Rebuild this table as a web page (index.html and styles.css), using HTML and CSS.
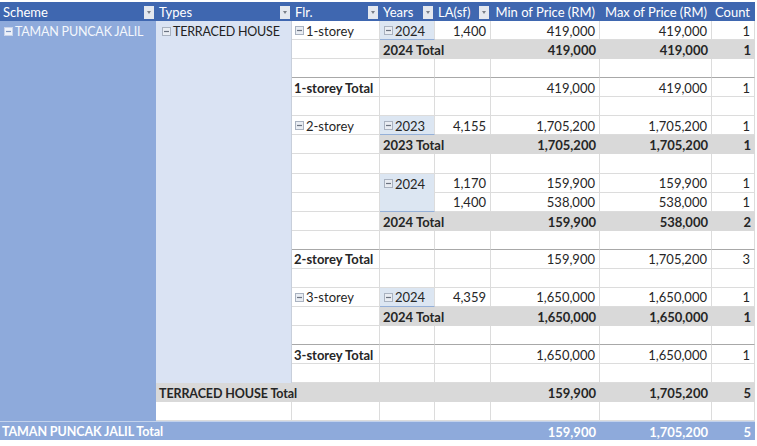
FILE: index.html
```html
<!DOCTYPE html>
<html>
<head>
<meta charset="utf-8">
<link rel="stylesheet" href="styles.css">
</head>
<body>
<div class="pivot">
  <div class="h">Scheme<span class="fb"></span></div>
  <div class="h">Types<span class="fb"></span></div>
  <div class="h">Flr.<span class="fb"></span></div>
  <div class="h">Years<span class="fb"></span></div>
  <div class="h">LA(sf)<span class="fb"></span></div>
  <div class="h r">Min of Price (RM)</div>
  <div class="h r">Max of Price (RM)</div>
  <div class="h r">Count</div>

  <div class="scheme"><span class="lbl"><svg class="tg" viewBox="0 0 9 9"><rect x="0.5" y="0.5" width="8" height="8" fill="#eef2fa" stroke="#c9d4ea"/><path d="M2 4.5h5" stroke="#7f97c4" stroke-width="1.2"/></svg>TAMAN PUNCAK JALIL</span></div>
  <div class="types"><span class="lbl"><svg class="tg" viewBox="0 0 9 9"><rect x="0.5" y="0.5" width="8" height="8" fill="#e9edf3" stroke="#a9b2c0"/><path d="M2 4.5h5" stroke="#6b7380" stroke-width="1.2"/></svg>TERRACED HOUSE</span></div>
  <div class="yr y2024b"><span class="lbl"><svg class="tg" viewBox="0 0 9 9"><rect x="0.5" y="0.5" width="8" height="8" fill="#e9edf3" stroke="#a9b2c0"/><path d="M2 4.5h5" stroke="#6b7380" stroke-width="1.2"/></svg>2024</span></div>

  <!-- row 1 -->
  <div class="c"><svg class="tg" viewBox="0 0 9 9"><rect x="0.5" y="0.5" width="8" height="8" fill="#e9edf3" stroke="#a9b2c0"/><path d="M2 4.5h5" stroke="#6b7380" stroke-width="1.2"/></svg>1-storey</div>
  <div class="yr"><svg class="tg" viewBox="0 0 9 9"><rect x="0.5" y="0.5" width="8" height="8" fill="#e9edf3" stroke="#a9b2c0"/><path d="M2 4.5h5" stroke="#6b7380" stroke-width="1.2"/></svg>2024</div>
  <div class="c n">1,400</div><div class="c n">419,000</div><div class="c n">419,000</div><div class="c n">1</div>
  <!-- row 2 -->
  <div class="c"></div>
  <div class="t s2">2024 Total</div><div class="t n">419,000</div><div class="t n">419,000</div><div class="t n">1</div>
  <!-- row 3 -->
  <div class="c dk"></div><div class="c dk"></div><div class="c dk"></div><div class="c dk"></div><div class="c dk"></div><div class="c dk"></div>
  <!-- row 4 -->
  <div class="c b">1-storey Total</div><div class="c"></div><div class="c"></div><div class="c n">419,000</div><div class="c n">419,000</div><div class="c n">1</div>
  <!-- row 5 -->
  <div class="c"></div><div class="c"></div><div class="c"></div><div class="c"></div><div class="c"></div><div class="c"></div>
  <!-- row 6 -->
  <div class="c"><svg class="tg" viewBox="0 0 9 9"><rect x="0.5" y="0.5" width="8" height="8" fill="#e9edf3" stroke="#a9b2c0"/><path d="M2 4.5h5" stroke="#6b7380" stroke-width="1.2"/></svg>2-storey</div>
  <div class="yr"><svg class="tg" viewBox="0 0 9 9"><rect x="0.5" y="0.5" width="8" height="8" fill="#e9edf3" stroke="#a9b2c0"/><path d="M2 4.5h5" stroke="#6b7380" stroke-width="1.2"/></svg>2023</div>
  <div class="c n">4,155</div><div class="c n">1,705,200</div><div class="c n">1,705,200</div><div class="c n">1</div>
  <!-- row 7 -->
  <div class="c"></div>
  <div class="t s2">2023 Total</div><div class="t n">1,705,200</div><div class="t n">1,705,200</div><div class="t n">1</div>
  <!-- row 8 -->
  <div class="c"></div><div class="c"></div><div class="c"></div><div class="c"></div><div class="c"></div><div class="c"></div>
  <!-- row 9 (years cell spans 9-10, placed explicitly) -->
  <div class="c"></div>
  <div class="c n">1,170</div><div class="c n">159,900</div><div class="c n">159,900</div><div class="c n">1</div>
  <!-- row 10 -->
  <div class="c"></div>
  <div class="c n">1,400</div><div class="c n">538,000</div><div class="c n">538,000</div><div class="c n">1</div>
  <!-- row 11 -->
  <div class="c"></div>
  <div class="t s2">2024 Total</div><div class="t n">159,900</div><div class="t n">538,000</div><div class="t n">2</div>
  <!-- row 12 -->
  <div class="c dk"></div><div class="c dk"></div><div class="c dk"></div><div class="c dk"></div><div class="c dk"></div><div class="c dk"></div>
  <!-- row 13 -->
  <div class="c b">2-storey Total</div><div class="c"></div><div class="c"></div><div class="c n">159,900</div><div class="c n">1,705,200</div><div class="c n">3</div>
  <!-- row 14 -->
  <div class="c"></div><div class="c"></div><div class="c"></div><div class="c"></div><div class="c"></div><div class="c"></div>
  <!-- row 15 -->
  <div class="c"><svg class="tg" viewBox="0 0 9 9"><rect x="0.5" y="0.5" width="8" height="8" fill="#e9edf3" stroke="#a9b2c0"/><path d="M2 4.5h5" stroke="#6b7380" stroke-width="1.2"/></svg>3-storey</div>
  <div class="yr"><svg class="tg" viewBox="0 0 9 9"><rect x="0.5" y="0.5" width="8" height="8" fill="#e9edf3" stroke="#a9b2c0"/><path d="M2 4.5h5" stroke="#6b7380" stroke-width="1.2"/></svg>2024</div>
  <div class="c n">4,359</div><div class="c n">1,650,000</div><div class="c n">1,650,000</div><div class="c n">1</div>
  <!-- row 16 -->
  <div class="c"></div>
  <div class="t s2">2024 Total</div><div class="t n">1,650,000</div><div class="t n">1,650,000</div><div class="t n">1</div>
  <!-- row 17 -->
  <div class="c dk"></div><div class="c dk"></div><div class="c dk"></div><div class="c dk"></div><div class="c dk"></div><div class="c dk"></div>
  <!-- row 18 -->
  <div class="c b">3-storey Total</div><div class="c"></div><div class="c"></div><div class="c n">1,650,000</div><div class="c n">1,650,000</div><div class="c n">1</div>
  <!-- row 19 -->
  <div class="c"></div><div class="c"></div><div class="c"></div><div class="c"></div><div class="c"></div><div class="c"></div>
  <!-- row 20 -->
  <div class="t s4 caps">TERRACED HOUSE Total</div><div class="t n">159,900</div><div class="t n">1,705,200</div><div class="t n">5</div>
  <!-- row 21 -->
  <div class="c"></div><div class="c"></div><div class="c"></div><div class="c"></div><div class="c"></div><div class="c"></div><div class="c"></div>
  <!-- row 22 -->
  <div class="g s5 caps">TAMAN PUNCAK JALIL Total</div><div class="g n">159,900</div><div class="g n">1,705,200</div><div class="g n">5</div>
</div>
</body>
</html>
```

FILE: styles.css
```css
html, body {
  margin: 0;
  padding: 0;
  background: #ffffff;
}
body {
  padding-top: 2px;
  font-family: Lato, "Open Sans", "Liberation Sans", sans-serif;
  font-size: 13px;
  color: #262626;
}
.pivot {
  display: grid;
  width: 755px;
  grid-template-columns: 156px 136px 88px 55px 56px 109px 112px 43px;
  grid-template-rows: 19px repeat(22, 19.07px);
}
.pivot > div {
  box-sizing: border-box;
  display: flex;
  align-items: center;
  white-space: nowrap;
  min-width: 0;
  padding: 1px 4px 0 3px;
}
.h {
  background: #3f67b0;
  color: #ffffff;
  justify-content: space-between;
}
.h.r {
  justify-content: flex-end;
  padding-right: 5px;
}
.fb {
  width: 10px;
  height: 13px;
  background: #e4e8ef;
  position: relative;
  margin-right: -2px;
  flex: none;
}
.fb::after {
  content: "";
  position: absolute;
  left: 3px;
  top: 5px;
  border-left: 2px solid transparent;
  border-right: 2px solid transparent;
  border-top: 3px solid #7a7f88;
}
.tg {
  width: 9px;
  height: 9px;
  margin-right: 2px;
  flex: none;
}
.lbl {
  display: flex;
  align-items: center;
  height: 18px;
}
.scheme {
  grid-column: 1;
  grid-row: 2 / span 21;
  background: #8eaadb;
  color: #f4f7fc;
  font-size: 12.5px;
  letter-spacing: -0.2px;
  align-items: flex-start !important;
  padding-left: 4px !important;
}
.types {
  grid-column: 2;
  grid-row: 2 / span 19;
  background: #dae3f3;
  color: #222;
  font-size: 12.5px;
  letter-spacing: -0.2px;
  align-items: flex-start !important;
  padding-left: 6px !important;
  border-right: 1px solid #c8cfdb;
}
.caps {
  font-size: 12.5px;
  letter-spacing: -0.1px;
}
.c {
  border-right: 1px solid #dcdcdc;
  border-bottom: 1px solid #dcdcdc;
}
.c.dk {
  border-bottom-color: #a8a8a8;
}
.n {
  justify-content: flex-end;
}
.b {
  font-weight: 700;
  padding-left: 2px !important;
}
.yr {
  background: #dce6f2;
  border-bottom: 1.5px solid #95b0d8;
  border-right: 1px solid #dcdcdc;
  padding-left: 4px !important;
}
.y2024b {
  grid-column: 4;
  grid-row: 10 / span 2;
  align-items: flex-start !important;
}
.t {
  background: #d9d9d9;
  font-weight: 700;
}
.s2 { grid-column: span 2; }
.s4 { grid-column: span 4; }
.s5 { grid-column: span 5; }
.g {
  background: #8eaadb;
  color: #ffffff;
  font-weight: 700;
  border-top: 1px solid #c3d2ec;
}
.g.s5 { padding-left: 2px !important; }
```
